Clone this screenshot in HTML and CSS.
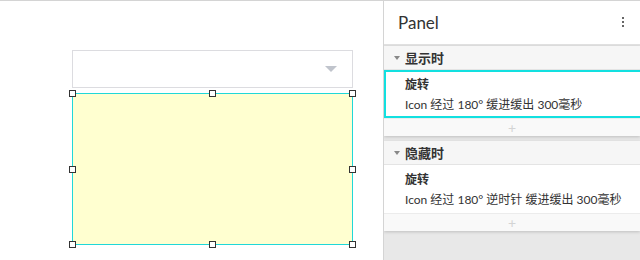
FILE: index.html
```html
<!DOCTYPE html>
<html>
  <head>
    <title>Interactions Panel</title>
    <link rel="stylesheet" href="styles.css">
  </head>
  <body>
    <div class="canvas">
      <div class="dropdown">
        <span class="caret"></span>
      </div>
      <div class="shape">
        <span class="handle tl"></span>
        <span class="handle tc"></span>
        <span class="handle tr"></span>
        <span class="handle ml"></span>
        <span class="handle mr"></span>
        <span class="handle bl"></span>
        <span class="handle bc"></span>
        <span class="handle br"></span>
      </div>
    </div>

    <div class="panel">
      <div class="panel-head">
        <div class="panel-title">Panel</div>
        <div class="kebab"><i></i><i></i><i></i></div>
      </div>

      <div class="section">
        <div class="section-head"><span class="tri"></span>显示时</div>
        <div class="action selected">
          <div class="action-name">旋转</div>
          <div class="action-desc">Icon 经过 180° 缓进缓出 300毫秒</div>
        </div>
        <div class="add">+</div>
      </div>

      <div class="section">
        <div class="section-head"><span class="tri"></span>隐藏时</div>
        <div class="action">
          <div class="action-name">旋转</div>
          <div class="action-desc">Icon 经过 180° 逆时针 缓进缓出 300毫秒</div>
        </div>
        <div class="add">+</div>
      </div>
    </div>
  </body>
</html>
```

FILE: styles.css
```css
body {
  margin: 0;
  display: flex;
  height: 260px;
  overflow: hidden;
  font-family: "Lato", "Noto Sans CJK SC", sans-serif;
  color: #333;
  background: #fff;
}
.canvas {
  width: 384px;
  flex-shrink: 0;
  border-top: 1px solid #d4d4d4;
  border-right: 1px solid #d4d4d4;
  padding: 49px 0 0 72px;
  box-sizing: border-box;
}
.dropdown {
  width: 281px;
  height: 38px;
  box-sizing: border-box;
  border: 1px solid #dcdce0;
  display: flex;
  align-items: center;
  justify-content: flex-end;
  padding-right: 15px;
}
.caret {
  width: 0;
  height: 0;
  border-left: 6px solid transparent;
  border-right: 6px solid transparent;
  border-top: 6px solid #c0c4cc;
}
.shape {
  position: relative;
  margin-top: 5px;
  width: 281px;
  height: 152px;
  box-sizing: border-box;
  border: 1px solid #20d8d8;
  background: #ffffd0;
}
.handle {
  position: absolute;
  width: 7px;
  height: 7px;
  box-sizing: border-box;
  border: 1px solid #333;
  background: #fff;
}
.tl, .tc, .tr { top: -4px; }
.ml, .mr { top: 72px; }
.bl, .bc, .br { bottom: -4px; }
.tl, .ml, .bl { left: -4px; }
.tc, .bc { left: 136px; }
.tr, .mr, .br { right: -4px; }

.panel {
  flex: 1;
  border-top: 1px solid #d4d4d4;
  background: #e8e8e8;
  overflow: hidden;
}
.panel-head {
  height: 43px;
  background: #fff;
  border-bottom: 2px solid #e2e2e2;
  display: flex;
  align-items: center;
  justify-content: space-between;
  padding: 0 16px 0 14px;
}
.panel-title {
  font-size: 17px;
  color: #333;
}
.kebab {
  display: flex;
  flex-direction: column;
  gap: 2px;
  margin-top: -2px;
}
.kebab i {
  width: 2px;
  height: 2px;
  background: #666;
}
.section {
  margin-bottom: 5px;
  box-shadow: 0 1px 3px rgba(0, 0, 0, 0.18);
}
.section-head {
  height: 23px;
  background: #f6f6f6;
  border-bottom: 1px solid #e4e4e4;
  display: flex;
  align-items: center;
  font-size: 13px;
  font-weight: bold;
  color: #333;
  padding-left: 10px;
}
.tri {
  width: 0;
  height: 0;
  border-left: 3px solid transparent;
  border-right: 3px solid transparent;
  border-top: 4px solid #888;
  margin-right: 5px;
}
.action {
  background: #fff;
  height: 48px;
  box-sizing: border-box;
  padding: 4px 0 0 19px;
  border: 2px solid transparent;
  border-right: none;
}
.action.selected {
  border-color: #12e0e0;
}
.action-name {
  font-size: 12px;
  font-weight: bold;
  line-height: 18px;
}
.action-desc {
  font-size: 12px;
  line-height: 20px;
  margin-top: 1px;
}
.add {
  height: 17px;
  background: #f9f9f9;
  border-top: 1px solid #ececec;
  text-align: center;
  font-size: 14px;
  line-height: 17px;
  color: #d4d4d4;
}
```
